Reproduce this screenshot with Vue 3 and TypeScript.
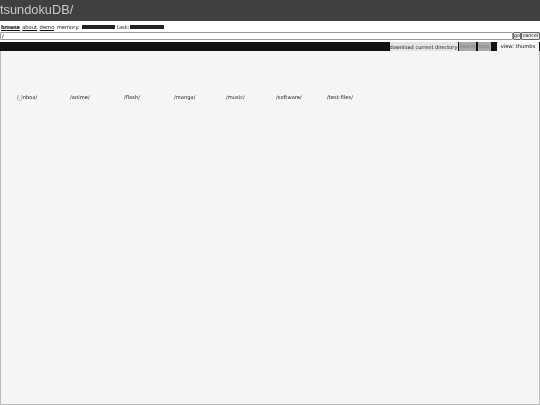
<script setup lang="ts">
const folders: { name: string; w: number }[] = [
  { name: '/_inbox/', w: 53 },
  { name: '/anime/', w: 54 },
  { name: '/flash/', w: 50 },
  { name: '/manga/', w: 52 },
  { name: '/music/', w: 50 },
  { name: '/software/', w: 51 },
  { name: '/test-files/', w: 60 },
]
</script>

<template>
  <div class="page">
    <header class="title">tsundokuDB/</header>
    <nav class="nav">
      <a class="link active">browse</a>
      <a class="link">about</a>
      <a class="link">demo</a>
      <span class="label">memory:</span>
      <span class="meter meter-mem"></span>
      <span class="label task">task:</span>
      <span class="meter meter-task"></span>
    </nav>
    <div class="path-row">
      <input class="path" value="/" />
      <button class="btn go">go</button>
      <button class="btn">cancel</button>
    </div>
    <div class="toolbar">
      <button class="tool dl">download current directory</button>
      <button class="tool off w-cancel">cancel</button>
      <button class="tool off w-stop">stop</button>
      <span class="view">view: thumbs</span>
    </div>
    <main class="content">
      <div class="folders">
        <span v-for="f in folders" :key="f.name" class="folder" :style="{ width: f.w + 'px' }">{{ f.name }}</span>
      </div>
    </main>
  </div>
</template>

<style>
html, body { margin: 0; background: #fff; }
</style>

<style scoped>
.page { width: 540px; height: 405px; display: flex; flex-direction: column; overflow: hidden; font-family: "DejaVu Sans", sans-serif; font-size: 5.2px; color: #111; filter: blur(0.3px); }
.title { height: 21px; line-height: 20px; background: #404040; color: #c8c8c8; font-family: "Liberation Sans", sans-serif; font-size: 12.8px; }
.nav { height: 10px; display: flex; align-items: center; gap: 2.5px; margin-top: 0.5px; padding-left: 1px; }
.link { text-decoration: underline; }
.active { text-shadow: 0.4px 0 0 #111; }
.meter { height: 3.5px; background: #222; margin-top: 1px; }
.meter-mem { width: 33px; margin-left: -0.5px; }
.meter-task { width: 34px; margin-left: -2.5px; }
.task { margin-left: -0.5px; }
.path-row { height: 9.5px; display: flex; gap: 0.5px; align-items: flex-start; padding-top: 0.5px; box-sizing: border-box; }
.path { flex: 1; min-width: 0; height: 6px; padding: 0 1px; border: 1px solid #999; border-radius: 1px; background: #fff; font: inherit; box-sizing: content-box; }
.btn { height: 8px; width: 19px; padding: 0; border: 1px solid #666; border-radius: 1px; background: #eee; font: inherit; font-size: 4.8px; color: #111; line-height: 6px; box-sizing: border-box; }
.go { width: 7.5px; }
.toolbar { height: 9px; margin-top: 1px; background: #111; display: flex; justify-content: flex-end; align-items: stretch; gap: 1.5px; padding-right: 1px; }
.tool { padding: 0; border: 0; background: #e4e4e4; font: inherit; font-size: 5px; color: #111; white-space: nowrap; text-align: center; }
.dl { width: 68px; }
.w-cancel { width: 17px; font-size: 4.8px; }
.w-stop { width: 13px; font-size: 4.8px; }
.off { background: #aaa; color: #777; }
.view { width: 42px; margin-left: 5px; background: #f5f5f5; text-align: center; line-height: 9px; border-radius: 1px 1px 0 0; }
.content { flex: 1; background: #f5f5f5; border: 1px solid #bbb; border-top: 0; }
.folders { display: flex; padding: 42.5px 0 0 16px; }
.folder { color: #222; }
</style>
